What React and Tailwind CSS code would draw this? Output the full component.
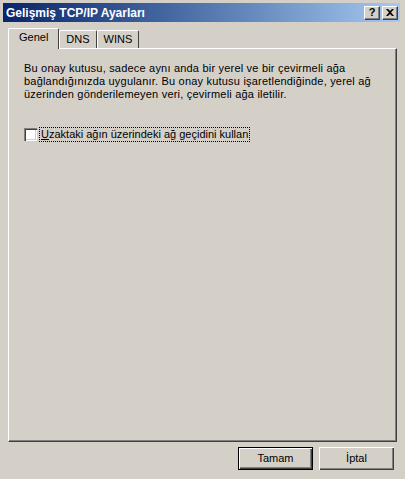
import React from 'react';

const font = { fontFamily: '"Liberation Sans", Arial, sans-serif' };

const CaptionButton = ({ children }) => (
  <div className="flex h-[14px] w-[16px] items-center justify-center border border-t-white border-l-white border-r-[#404040] border-b-[#404040] bg-[#d4d0c8] text-[11px] font-bold leading-none text-black shadow-[inset_-1px_-1px_0_#808080]">
    {children}
  </div>
);

const Tab = ({ label, active }) => (
  <div
    className={`flex items-center border-l border-t border-l-white border-t-white border-r border-r-[#404040] rounded-t-[2px] bg-[#d4d0c8] ${
      active ? 'relative z-10 -mb-px h-[21px] px-[10px] pb-[3px]' : 'h-[18px] px-[6px]'
    }`}
  >
    {label}
  </div>
);

const PushButton = ({ children, isDefault }) => (
  <div
    className={`flex h-[23px] w-[75px] items-center justify-center bg-[#d4d0c8] shadow-[inset_1px_1px_0_#fff,inset_-1px_-1px_0_#404040,inset_-2px_-2px_0_#808080] ${
      isDefault ? 'border border-black' : ''
    }`}
  >
    {children}
  </div>
);

export default function App() {
  return (
    <div
      className="flex h-[479px] w-[405px] flex-col overflow-hidden bg-[#d4d0c8] text-[11px] text-black"
      style={font}
    >
      <div className="flex h-full flex-col border-l-2 border-l-[#d4d0c8] pl-px pr-[5px] pt-[3px]">
        <div className="flex h-[19px] items-center justify-between bg-gradient-to-r from-[#0a246a] to-[#a6caf0] pl-[3px] pr-[2px]">
          <span className="text-[12px] font-bold text-white">Gelişmiş TCP/IP Ayarları</span>
          <div className="flex gap-[2px]">
            <CaptionButton>?</CaptionButton>
            <CaptionButton>
              <svg width="8" height="7" viewBox="0 0 8 7">
                <path d="M0 0h2l2 2 2-2h2L5 3.5 8 7H6L4 5 2 7H0l3-3.5z" fill="#000" />
              </svg>
            </CaptionButton>
          </div>
        </div>

        <div className="flex flex-1 flex-col pl-[5px] pr-[3px] pt-[6px]">
          <div className="flex items-end">
            <Tab label="Genel" active />
            <Tab label="DNS" />
            <Tab label="WINS" />
          </div>
          <div className="flex flex-1 flex-col border border-t-white border-l-white border-r-[#404040] border-b-[#404040] shadow-[inset_-1px_-1px_0_#808080] px-[15px] pt-[13px]">
            <p className="leading-[13px] tracking-[0.2px]">
              Bu onay kutusu, sadece aynı anda bir yerel ve bir çevirmeli ağa
              <br />
              bağlandığınızda uygulanır. Bu onay kutusu işaretlendiğinde, yerel ağ
              <br />
              üzerinden gönderilemeyen veri, çevirmeli ağa iletilir.
            </p>
            <div className="mt-[26px] flex items-center gap-[2px]">
              <div className="h-[13px] w-[13px] bg-white shadow-[inset_1px_1px_0_#808080,inset_2px_2px_0_#404040,inset_-1px_-1px_0_#fff,inset_-2px_-2px_0_#d4d0c8]" />
              <span className="border border-dotted border-black px-px leading-[13px]">
                <u>U</u>zaktaki ağın üzerindeki ağ geçidini kullan
              </span>
            </div>
          </div>
          <div className="flex h-[37px] items-start justify-end gap-[6px] pr-[3px] pt-[5px]">
            <PushButton isDefault>Tamam</PushButton>
            <PushButton>İptal</PushButton>
          </div>
        </div>
      </div>
    </div>
  );
}
